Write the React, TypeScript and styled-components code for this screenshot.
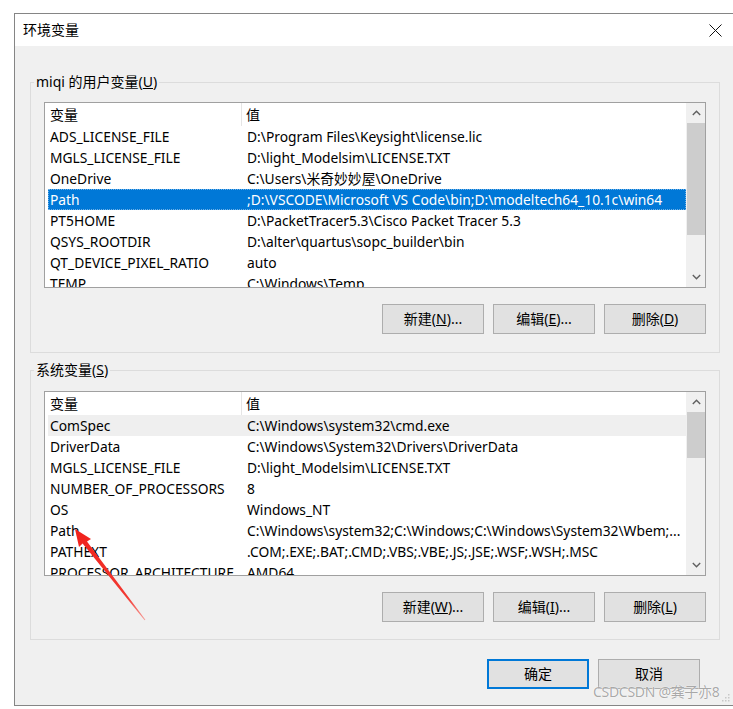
import React from "react";
import styled, { createGlobalStyle } from "styled-components";

const GlobalStyle = createGlobalStyle`
  html, body {
    margin: 0;
    padding: 0;
    background: #ffffff;
    overflow: hidden;
  }
  body {
    font-family: "Noto Sans", "Noto Sans CJK SC", sans-serif;
    -webkit-font-smoothing: antialiased;
  }
`;

const Page = styled.div`
  position: relative;
  width: 733px;
  height: 709px;
  overflow: hidden;
`;

const Dialog = styled.div`
  margin: 13px 0 0 14px;
  width: 760px;
  border: 1px solid #858585;
  border-right: none;
  background: #f0f0f0;
  font-size: 13.8px;
  color: #000;
`;

const TitleBar = styled.div`
  height: 32px;
  background: #ffffff;
  display: flex;
  align-items: center;
  width: 718px;
  box-sizing: border-box;
  padding: 0 11px 0 8px;
`;

const Title = styled.div`
  flex: 1;
  font-size: 14px;
  line-height: 20px;
`;

const Content = styled.div`
  padding: 0 0 16px 15px;
  width: 690px;
`;

const Group = styled.div<{ $top: number; $padTop: number; $padBottom: number }>`
  position: relative;
  margin-top: ${(p) => p.$top}px;
  border: 1px solid #dcdcdc;
  padding: ${(p) => p.$padTop}px 13px ${(p) => p.$padBottom}px;
`;

const GroupLabel = styled.span`
  position: absolute;
  top: -11px;
  left: 3px;
  padding: 0 2px;
  line-height: 20px;
  font-size: 14px;
  background: #f0f0f0;
  white-space: nowrap;
`;

const ListBox = styled.div<{ $h: number }>`
  height: ${(p) => p.$h}px;
  box-sizing: border-box;
  border: 1px solid #a0a0a0;
  background: #ffffff;
  display: flex;
`;

const ListBody = styled.div`
  flex: 1;
  min-width: 0;
  overflow: hidden;
`;

const HeaderRow = styled.div`
  display: grid;
  grid-template-columns: 197px 1fr;
  height: 23px;
  line-height: 23px;
  font-size: 14px;
`;

const HeaderCell = styled.div<{ $first?: boolean }>`
  padding-left: ${(p) => (p.$first ? 5 : 4)}px;
  border-right: ${(p) => (p.$first ? "1px solid #e5e5e5" : "none")};
`;

const Row = styled.div<{ $state?: "selected" | "hover" }>`
  display: grid;
  grid-template-columns: 197px 1fr;
  height: 21px;
  line-height: 21px;
  margin-left: 3px;
  box-sizing: border-box;
  white-space: nowrap;
  background: ${(p) =>
    p.$state === "selected" ? "#0078d7" : p.$state === "hover" ? "#efefef" : "transparent"};
  color: ${(p) => (p.$state === "selected" ? "#ffffff" : "#000000")};
  outline: ${(p) => (p.$state === "selected" ? "1px dotted #6fb0e6" : "none")};
  outline-offset: -1px;
`;

const Cell = styled.div`
  padding-left: 2px;
  overflow: hidden;
`;

const ScrollBar = styled.div`
  width: 19px;
  box-sizing: border-box;
  padding: 0 0 0 1px;
  background: #f0f0f0;
  display: flex;
  flex-direction: column;
`;

const ScrollArrow = styled.div`
  height: 20px;
  display: flex;
  align-items: center;
  justify-content: center;
`;

const Thumb = styled.div<{ $h: number }>`
  height: ${(p) => p.$h}px;
  background: #cdcdcd;
`;

const Track = styled.div`
  flex: 1;
`;

const ButtonRow = styled.div<{ $top: number }>`
  display: flex;
  justify-content: flex-end;
  gap: 9px;
  margin-top: ${(p) => p.$top}px;
`;

const Button = styled.button<{ $default?: boolean }>`
  width: 102px;
  height: 30px;
  box-sizing: border-box;
  margin: 0;
  padding: 0;
  border: ${(p) => (p.$default ? "2px solid #0078d7" : "1px solid #adadad")};
  background: #e1e1e1;
  font-family: "Noto Sans", "Noto Sans CJK SC", sans-serif;
  font-size: 14px;
  color: #000;
  line-height: 20px;
`;

const Footer = styled.div`
  display: flex;
  justify-content: flex-end;
  gap: 9px;
  margin-top: 19px;
  padding-right: 20px;
`;

const Overlay = styled.svg`
  position: absolute;
  left: 0;
  top: 0;
  pointer-events: none;
`;

const Watermark = styled.span`
  position: absolute;
  top: 683px;
  left: 593px;
  font-family: "Noto Sans", "Noto Sans CJK SC", sans-serif;
  font-size: 14px;
  line-height: 18px;
  letter-spacing: -0.3px;
  color: rgba(110, 110, 110, 0.6);
  text-shadow: 0 0 1px #fff, 0 0 1px #fff;
  white-space: nowrap;
`;

const Up = () => (
  <svg width="9" height="6" viewBox="0 0 9 6">
    <path d="M0.8 5 L4.5 1.3 L8.2 5" fill="none" stroke="#606060" strokeWidth="1.4" />
  </svg>
);
const Down = () => (
  <svg width="9" height="6" viewBox="0 0 9 6">
    <path d="M0.8 1 L4.5 4.7 L8.2 1" fill="none" stroke="#606060" strokeWidth="1.4" />
  </svg>
);

type Item = { name: string; value: string; state?: "selected" | "hover" };

const userVars: Item[] = [
  { name: "ADS_LICENSE_FILE", value: "D:\\Program Files\\Keysight\\license.lic" },
  { name: "MGLS_LICENSE_FILE", value: "D:\\light_Modelsim\\LICENSE.TXT" },
  { name: "OneDrive", value: "C:\\Users\\米奇妙妙屋\\OneDrive" },
  {
    name: "Path",
    value: ";D:\\VSCODE\\Microsoft VS Code\\bin;D:\\modeltech64_10.1c\\win64",
    state: "selected",
  },
  { name: "PT5HOME", value: "D:\\PacketTracer5.3\\Cisco Packet Tracer 5.3" },
  { name: "QSYS_ROOTDIR", value: "D:\\alter\\quartus\\sopc_builder\\bin" },
  { name: "QT_DEVICE_PIXEL_RATIO", value: "auto" },
  { name: "TEMP", value: "C:\\Windows\\Temp" },
];

const sysVars: Item[] = [
  { name: "ComSpec", value: "C:\\Windows\\system32\\cmd.exe", state: "hover" },
  { name: "DriverData", value: "C:\\Windows\\System32\\Drivers\\DriverData" },
  { name: "MGLS_LICENSE_FILE", value: "D:\\light_Modelsim\\LICENSE.TXT" },
  { name: "NUMBER_OF_PROCESSORS", value: "8" },
  { name: "OS", value: "Windows_NT" },
  { name: "Path", value: "C:\\Windows\\system32;C:\\Windows;C:\\Windows\\System32\\Wbem;..." },
  { name: "PATHEXT", value: ".COM;.EXE;.BAT;.CMD;.VBS;.VBE;.JS;.JSE;.WSF;.WSH;.MSC" },
  { name: "PROCESSOR_ARCHITECTURE", value: "AMD64" },
];

const VarList = ({ items, height, thumb }: { items: Item[]; height: number; thumb: number }) => (
  <ListBox $h={height}>
    <ListBody>
      <HeaderRow>
        <HeaderCell $first>变量</HeaderCell>
        <HeaderCell>值</HeaderCell>
      </HeaderRow>
      {items.map((it) => (
        <Row key={it.name} $state={it.state}>
          <Cell>{it.name}</Cell>
          <Cell>{it.value}</Cell>
        </Row>
      ))}
    </ListBody>
    <ScrollBar>
      <ScrollArrow>
        <Up />
      </ScrollArrow>
      <Thumb $h={thumb} />
      <Track />
      <ScrollArrow>
        <Down />
      </ScrollArrow>
    </ScrollBar>
  </ListBox>
);

export default function App() {
  return (
    <Page>
      <GlobalStyle />
      <Dialog>
        <TitleBar>
          <Title>环境变量</Title>
          <svg width="13" height="13" viewBox="0 0 13 13">
            <path d="M0.5 0.5 L12.5 12.5 M12.5 0.5 L0.5 12.5" stroke="#111" strokeWidth="1" />
          </svg>
        </TitleBar>
        <Content>
          <Group $top={36} $padTop={19} $padBottom={18}>
            <GroupLabel>
              miqi 的用户变量(<u>U</u>)
            </GroupLabel>
            <VarList items={userVars} height={186} thumb={112} />
            <ButtonRow $top={16}>
              <Button>
                新建(<u>N</u>)...
              </Button>
              <Button>
                编辑(<u>E</u>)...
              </Button>
              <Button>
                删除(<u>D</u>)
              </Button>
            </ButtonRow>
          </Group>
          <Group $top={17} $padTop={20} $padBottom={17}>
            <GroupLabel>
              系统变量(<u>S</u>)
            </GroupLabel>
            <VarList items={sysVars} height={185} thumb={46} />
            <ButtonRow $top={16}>
              <Button>
                新建(<u>W</u>)...
              </Button>
              <Button>
                编辑(<u>I</u>)...
              </Button>
              <Button>
                删除(<u>L</u>)
              </Button>
            </ButtonRow>
          </Group>
          <Footer>
            <Button $default>确定</Button>
            <Button>取消</Button>
          </Footer>
        </Content>
      </Dialog>
      <Watermark>CSDCSDN @龚子亦8</Watermark>
      <Overlay width="733" height="709" viewBox="0 0 733 709">
        <defs>
          <linearGradient id="arrowFade" x1="75" y1="529" x2="145" y2="620" gradientUnits="userSpaceOnUse">
            <stop offset="0" stopColor="#f0211b" />
            <stop offset="0.75" stopColor="#f23a33" />
            <stop offset="1" stopColor="#f6a09b" />
          </linearGradient>
        </defs>
        <polygon
          points="75,529 91,539 87,541.5 145.4,619.7 144.6,620.3 82.6,543.5 79,547"
          fill="url(#arrowFade)"
        />
        <g fill="#c8c8c8">
          <rect x="728" y="694" width="1.5" height="1.5" />
          <rect x="725" y="697" width="1.5" height="1.5" />
          <rect x="728" y="697" width="1.5" height="1.5" />
          <rect x="722" y="700" width="1.5" height="1.5" />
          <rect x="725" y="700" width="1.5" height="1.5" />
          <rect x="728" y="700" width="1.5" height="1.5" />
        </g>
      </Overlay>
    </Page>
  );
}
